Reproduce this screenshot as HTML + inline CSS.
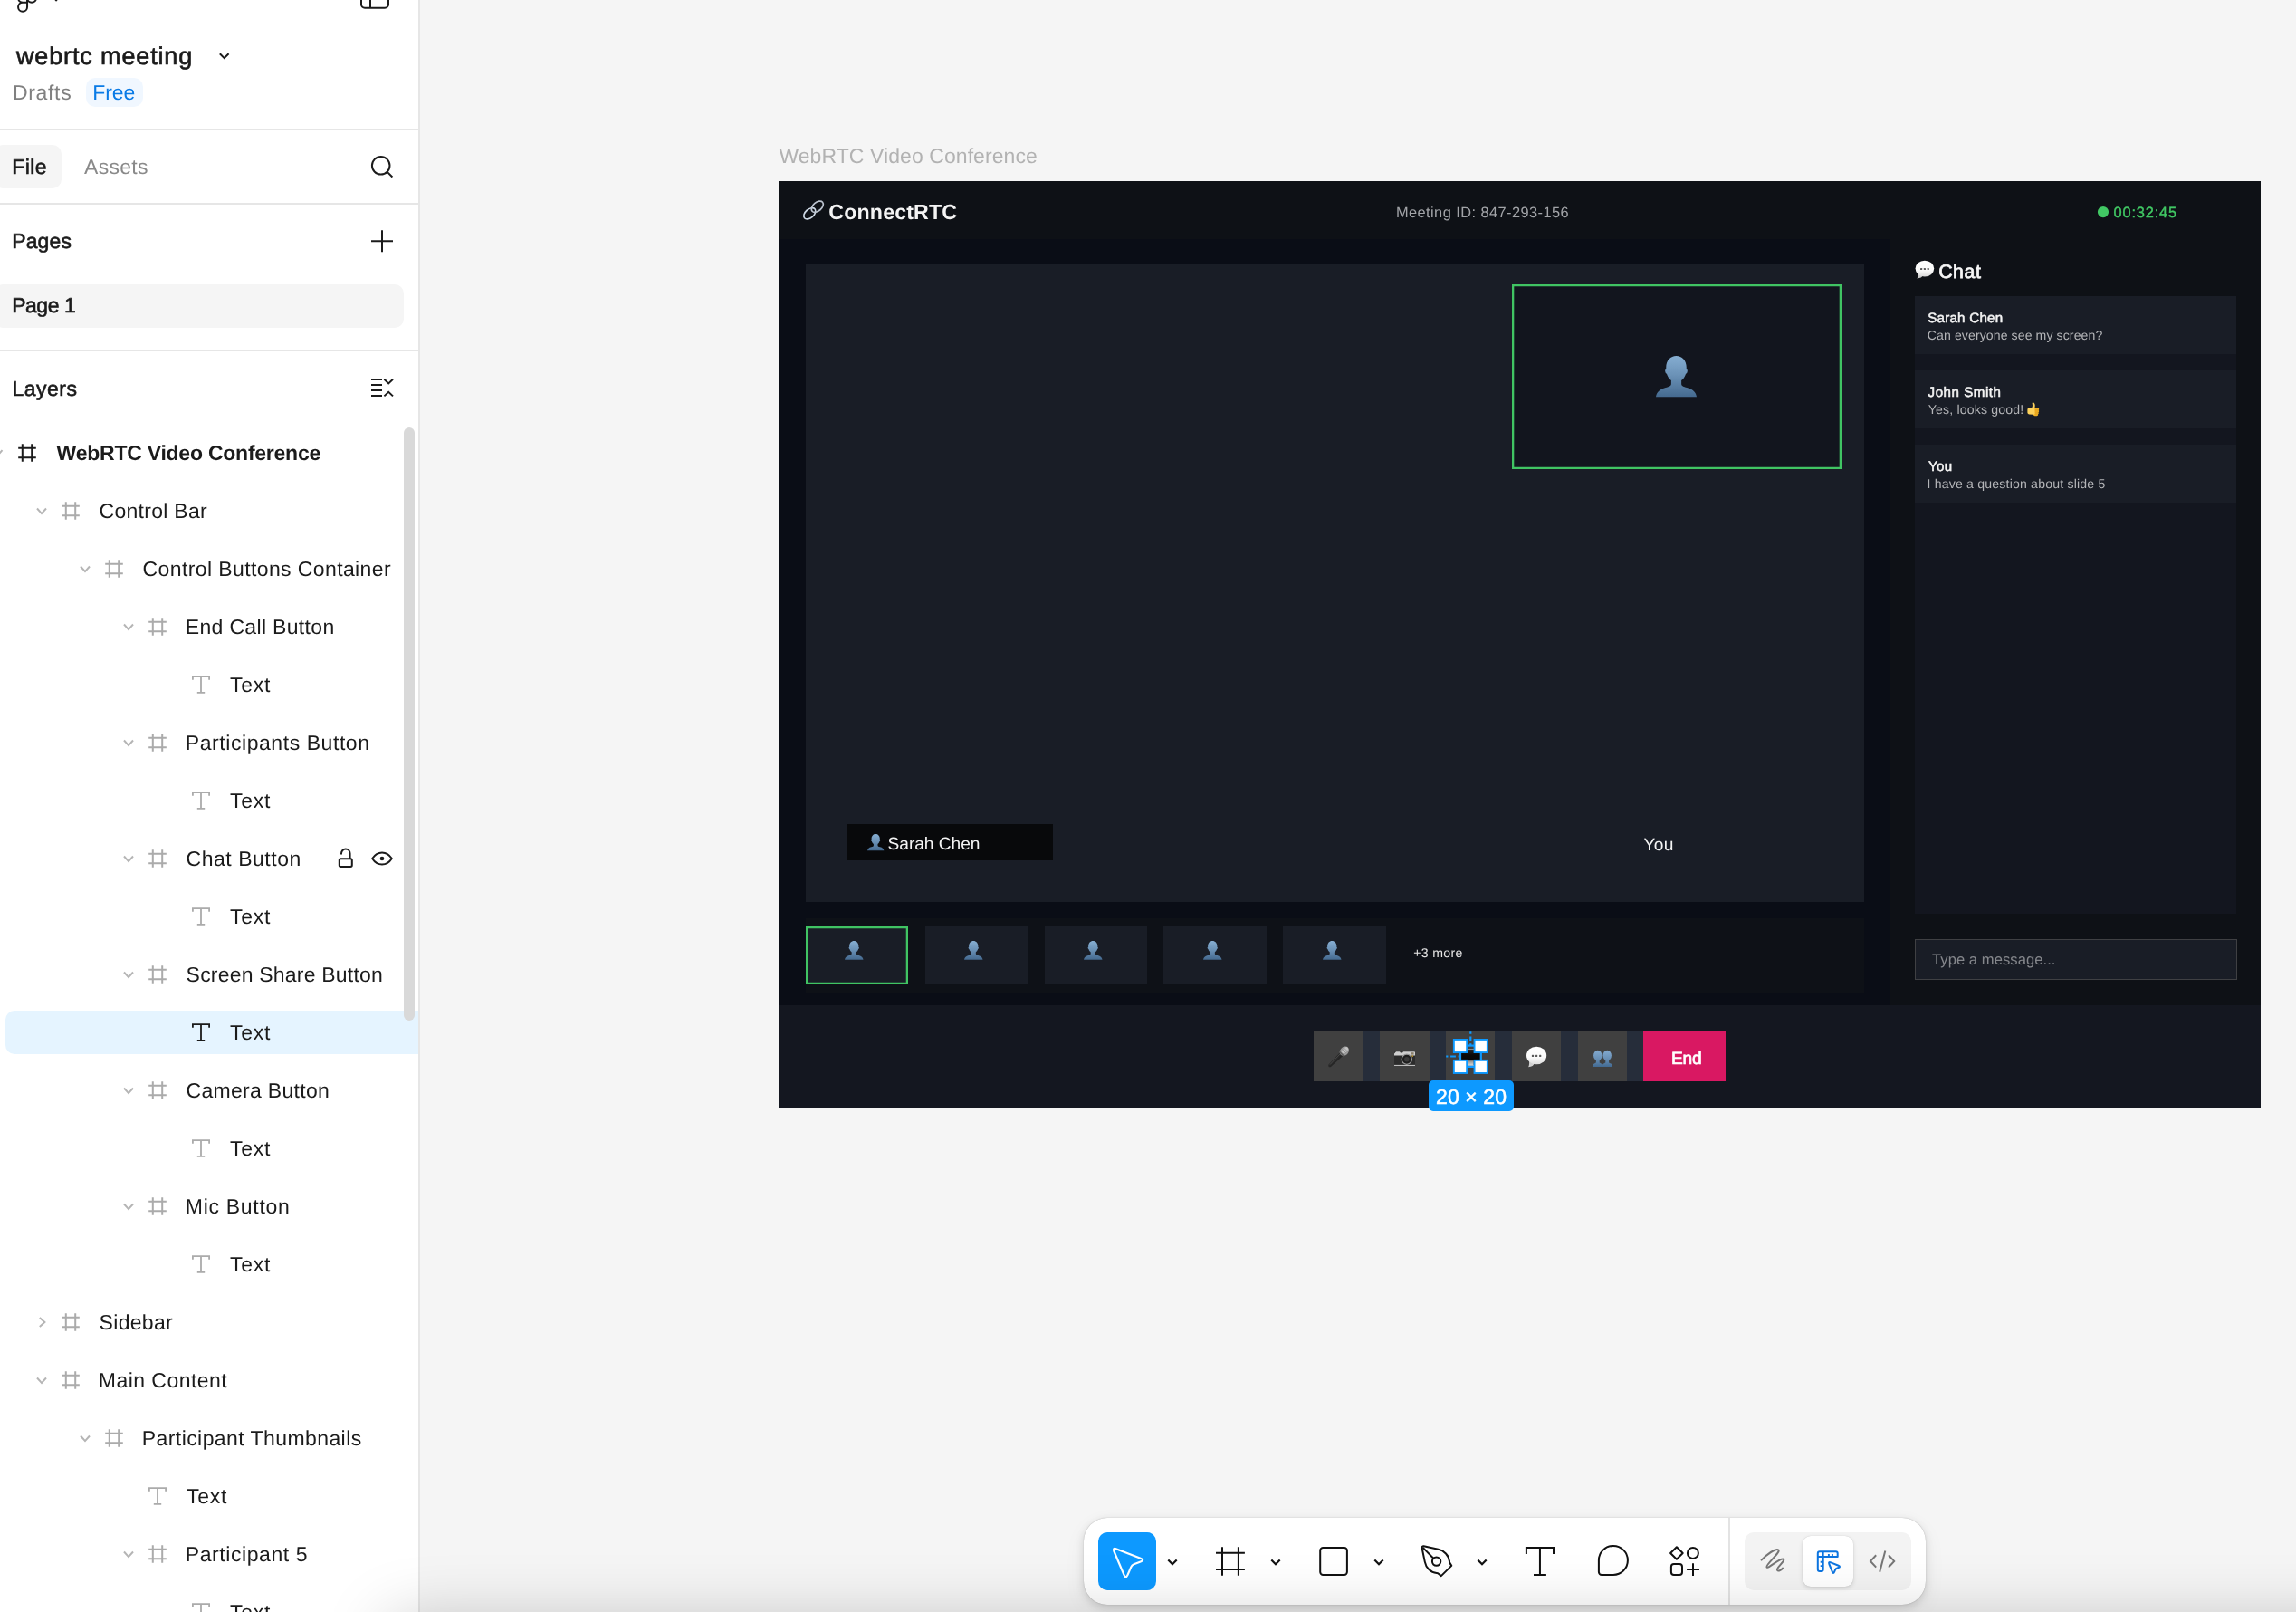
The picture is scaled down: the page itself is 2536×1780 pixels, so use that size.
<!DOCTYPE html><html lang="en"><head><meta charset="utf-8"><title>webrtc meeting – Figma</title>
<style>
html,body{margin:0;padding:0}
html,body{width:2536px;height:1780px;overflow:hidden;background:#f5f5f5}
body{font-family:"Liberation Sans",sans-serif;}
#app{position:relative;width:2536px;height:1780px;overflow:hidden;background:#f5f5f5}
.b{position:absolute;display:block;box-sizing:border-box}
.t{position:absolute;white-space:nowrap;display:block;font-kerning:normal;text-rendering:geometricPrecision}
svg{overflow:visible}
</style></head><body><div id="app">
<svg width="0" height="0" style="position:absolute"><defs>
<linearGradient id="bustg" x1="0" y1="0" x2="0" y2="1"><stop offset="0" stop-color="#86aed2"/><stop offset="0.45" stop-color="#6c93b8"/><stop offset="1" stop-color="#456a90"/></linearGradient>
<linearGradient id="bubg" x1="0" y1="0" x2="0" y2="1"><stop offset="0" stop-color="#ffffff"/><stop offset="0.6" stop-color="#fafafa"/><stop offset="1" stop-color="#dcdcdc"/></linearGradient>
<linearGradient id="micg" x1="0" y1="0" x2="1" y2="1"><stop offset="0" stop-color="#3c3c3c"/><stop offset="1" stop-color="#141414"/></linearGradient>
<linearGradient id="mong" x1="0" y1="0" x2="0" y2="1"><stop offset="0" stop-color="#2a2a2a"/><stop offset="0.5" stop-color="#0a0a0a"/><stop offset="1" stop-color="#050505"/></linearGradient>
<linearGradient id="stdg" x1="0" y1="0" x2="0" y2="1"><stop offset="0" stop-color="#8a8a8a"/><stop offset="1" stop-color="#d0d0d0"/></linearGradient>
</defs></svg>
<div class="b" style="left:860.0px;top:200.0px;width:1637.4px;height:63.7px;background:#0e1116;"></div>
<div class="b" style="left:860.0px;top:263.7px;width:1228.3px;height:846.3px;background:#0a0d16;"></div>
<div class="b" style="left:2088.3px;top:263.7px;width:409.1px;height:846.3px;background:#0e1116;"></div>
<div class="b" style="left:860.0px;top:1110.0px;width:1637.4px;height:112.9px;background:#141720;"></div>
<div class="b" style="left:889.5px;top:290.8px;width:1169.0px;height:704.9px;background:#191d26;"></div>
<div class="b" style="left:1669.6px;top:313.5px;width:364.3px;height:204.9px;background:#12151e;box-shadow:inset 0 0 0 2.3px #40c463;"></div>
<svg class="b" style="left:1829.3px;top:392.9px" width="45.0" height="45.2" viewBox="0 0 100 100" preserveAspectRatio="none"><path d="M50 0C64 0 75 11 75 28C75 30 75 31 74.8 32.5C77.5 33 78 36 77 39C76.5 42 75 43.5 73.5 43.5C71 52 66 57 62.5 60L62.5 68C62.5 74 68 75.5 76 77.5C90 81 98 88 100 100L0 100C2 88 10 81 24 77.5C32 75.5 37.5 74 37.5 68L37.5 60C34 57 29 52 26.5 43.5C25 43.5 23.5 42 23 39C22 36 22.5 33 25.2 32.5C25 31 25 30 25 28C25 11 36 0 50 0Z" fill="url(#bustg)"/></svg>
<div class="b" style="left:935.0px;top:909.8px;width:227.5px;height:40.5px;background:#08090b;"></div>
<svg class="b" style="left:957.6px;top:920.7px" width="18.4" height="18.3" viewBox="0 0 100 100" preserveAspectRatio="none"><path d="M50 0C64 0 75 11 75 28C75 30 75 31 74.8 32.5C77.5 33 78 36 77 39C76.5 42 75 43.5 73.5 43.5C71 52 66 57 62.5 60L62.5 68C62.5 74 68 75.5 76 77.5C90 81 98 88 100 100L0 100C2 88 10 81 24 77.5C32 75.5 37.5 74 37.5 68L37.5 60C34 57 29 52 26.5 43.5C25 43.5 23.5 42 23 39C22 36 22.5 33 25.2 32.5C25 31 25 30 25 28C25 11 36 0 50 0Z" fill="url(#bustg)"/></svg>
<div class="b" style="left:889.5px;top:1013.8px;width:1169.0px;height:82.0px;background:#0e1117;"></div>
<div class="b" style="left:889.6px;top:1023.2px;width:113.6px;height:63.7px;background:#191d26;box-shadow:inset 0 0 0 2.25px #40c463;"></div>
<svg class="b" style="left:932.7px;top:1039.3px" width="20.5" height="20.7" viewBox="0 0 100 100" preserveAspectRatio="none"><path d="M50 0C64 0 75 11 75 28C75 30 75 31 74.8 32.5C77.5 33 78 36 77 39C76.5 42 75 43.5 73.5 43.5C71 52 66 57 62.5 60L62.5 68C62.5 74 68 75.5 76 77.5C90 81 98 88 100 100L0 100C2 88 10 81 24 77.5C32 75.5 37.5 74 37.5 68L37.5 60C34 57 29 52 26.5 43.5C25 43.5 23.5 42 23 39C22 36 22.5 33 25.2 32.5C25 31 25 30 25 28C25 11 36 0 50 0Z" fill="url(#bustg)"/></svg>
<div class="b" style="left:1021.5px;top:1023.2px;width:113.6px;height:63.7px;background:#191d26;"></div>
<svg class="b" style="left:1064.8px;top:1039.3px" width="20.5" height="20.7" viewBox="0 0 100 100" preserveAspectRatio="none"><path d="M50 0C64 0 75 11 75 28C75 30 75 31 74.8 32.5C77.5 33 78 36 77 39C76.5 42 75 43.5 73.5 43.5C71 52 66 57 62.5 60L62.5 68C62.5 74 68 75.5 76 77.5C90 81 98 88 100 100L0 100C2 88 10 81 24 77.5C32 75.5 37.5 74 37.5 68L37.5 60C34 57 29 52 26.5 43.5C25 43.5 23.5 42 23 39C22 36 22.5 33 25.2 32.5C25 31 25 30 25 28C25 11 36 0 50 0Z" fill="url(#bustg)"/></svg>
<div class="b" style="left:1153.5px;top:1023.2px;width:113.6px;height:63.7px;background:#191d26;"></div>
<svg class="b" style="left:1196.8px;top:1039.3px" width="20.5" height="20.7" viewBox="0 0 100 100" preserveAspectRatio="none"><path d="M50 0C64 0 75 11 75 28C75 30 75 31 74.8 32.5C77.5 33 78 36 77 39C76.5 42 75 43.5 73.5 43.5C71 52 66 57 62.5 60L62.5 68C62.5 74 68 75.5 76 77.5C90 81 98 88 100 100L0 100C2 88 10 81 24 77.5C32 75.5 37.5 74 37.5 68L37.5 60C34 57 29 52 26.5 43.5C25 43.5 23.5 42 23 39C22 36 22.5 33 25.2 32.5C25 31 25 30 25 28C25 11 36 0 50 0Z" fill="url(#bustg)"/></svg>
<div class="b" style="left:1285.4px;top:1023.2px;width:113.6px;height:63.7px;background:#191d26;"></div>
<svg class="b" style="left:1328.9px;top:1039.3px" width="20.5" height="20.7" viewBox="0 0 100 100" preserveAspectRatio="none"><path d="M50 0C64 0 75 11 75 28C75 30 75 31 74.8 32.5C77.5 33 78 36 77 39C76.5 42 75 43.5 73.5 43.5C71 52 66 57 62.5 60L62.5 68C62.5 74 68 75.5 76 77.5C90 81 98 88 100 100L0 100C2 88 10 81 24 77.5C32 75.5 37.5 74 37.5 68L37.5 60C34 57 29 52 26.5 43.5C25 43.5 23.5 42 23 39C22 36 22.5 33 25.2 32.5C25 31 25 30 25 28C25 11 36 0 50 0Z" fill="url(#bustg)"/></svg>
<div class="b" style="left:1417.3px;top:1023.2px;width:113.6px;height:63.7px;background:#191d26;"></div>
<svg class="b" style="left:1460.9px;top:1039.3px" width="20.5" height="20.7" viewBox="0 0 100 100" preserveAspectRatio="none"><path d="M50 0C64 0 75 11 75 28C75 30 75 31 74.8 32.5C77.5 33 78 36 77 39C76.5 42 75 43.5 73.5 43.5C71 52 66 57 62.5 60L62.5 68C62.5 74 68 75.5 76 77.5C90 81 98 88 100 100L0 100C2 88 10 81 24 77.5C32 75.5 37.5 74 37.5 68L37.5 60C34 57 29 52 26.5 43.5C25 43.5 23.5 42 23 39C22 36 22.5 33 25.2 32.5C25 31 25 30 25 28C25 11 36 0 50 0Z" fill="url(#bustg)"/></svg>
<div class="b" style="left:2115.3px;top:327.0px;width:355.1px;height:682.3px;background:#13161f;"></div>
<div class="b" style="left:2115.3px;top:327.0px;width:355.1px;height:64.0px;background:#191d26;"></div>
<div class="b" style="left:2115.3px;top:408.8px;width:355.1px;height:64.1px;background:#191d26;"></div>
<div class="b" style="left:2115.3px;top:491.0px;width:355.1px;height:63.7px;background:#191d26;"></div>
<div class="b" style="left:2115.3px;top:1036.9px;width:355.3px;height:45.3px;background:#191d26;border:1px solid #3f4043;"></div>
<svg class="b" style="left:0;top:0" width="2536" height="1780"><path d="M2118.5 301.5Q2118.7 306.6 2117.3 307.6Q2123.3 307.0 2123.3 304.6Z" fill="#cfcfcf"/><ellipse cx="2125.9" cy="296.6" rx="10.3" ry="8.9" fill="url(#bubg)"/><rect x="2121.0" y="295.9" width="2.2" height="2.2" rx="0.6" fill="#5a5a5a"/><rect x="2124.8" y="295.9" width="2.2" height="2.2" rx="0.6" fill="#5a5a5a"/><rect x="2128.6" y="295.9" width="2.2" height="2.2" rx="0.6" fill="#5a5a5a"/></svg>
<svg class="b" style="left:0;top:0" width="2536" height="1780"><ellipse cx="894.3" cy="235.8" rx="7.6" ry="4.7" transform="rotate(-41 894.3 235.8)" fill="none" stroke="#cdd8e4" stroke-width="1.7"/><ellipse cx="902.8" cy="228.2" rx="7.6" ry="4.7" transform="rotate(-41 902.8 228.2)" fill="none" stroke="#bcc4cf" stroke-width="1.7"/><circle cx="2323" cy="234.1" r="6.1" fill="#41c864"/></svg>
<svg class="b" style="left:2238.8px;top:443.6px" width="14" height="15" viewBox="0 0 14 15"><path d="M7 6.3h4.6c1 0 1.6.7 1.6 1.5 0 .5-.2.9-.6 1.1.4.3.6.7.6 1.1 0 .6-.3 1-.8 1.2.3.3.4.6.4 1 0 .6-.4 1-.9 1.2.1.2.2.4.2.7 0 .7-.6 1.2-1.4 1.2H8.4C7.4 14.5 6.8 14 6.4 13.4Z" fill="#f0af24"/><path d="M0.4 8.2C0.4 7.2 1.2 6.6 2.2 6.6L5.2 6.4C6 5 6.2 3.4 5.7 1.7 5.4.6 6.3-.1 7.2.4 8.5 1.2 8.9 3 8.7 4.6L8.4 6.6 8.6 12.6C8.6 13.4 8 13.8 7.2 13.7L2.4 13.5C1.2 13.4.4 12.6.4 11.6Z" fill="#fdd25c"/><path d="M8.8 8.9h3.6M8.9 11.1h3.5M9 13h2.9" stroke="#d9981a" stroke-width="0.5" fill="none"/></svg>
<div class="b" style="left:1451.3px;top:1139.1px;width:454.7px;height:54.7px;background:#262d3a;"></div>
<div class="b" style="left:1451.3px;top:1139.1px;width:54.7px;height:54.7px;background:#404040;"></div>
<div class="b" style="left:1524.2px;top:1139.1px;width:54.4px;height:54.7px;background:#404040;"></div>
<div class="b" style="left:1597.0px;top:1139.1px;width:54.4px;height:54.7px;background:#404040;"></div>
<div class="b" style="left:1669.9px;top:1139.1px;width:54.3px;height:54.7px;background:#404040;"></div>
<div class="b" style="left:1742.6px;top:1139.1px;width:54.4px;height:54.7px;background:#404040;"></div>
<div class="b" style="left:1815.0px;top:1139.1px;width:91.0px;height:54.7px;background:#d91862;"></div>
<svg class="b" style="left:0;top:0" width="2536" height="1780"><path d="M1689.1 1170.9Q1689.3 1177.2 1687.9 1178.2Q1694.3 1177.6 1694.3 1174.3Z" fill="#cfcfcf"/><ellipse cx="1697.1" cy="1165.5" rx="11.1" ry="9.8" fill="url(#bubg)"/><rect x="1691.9" y="1164.8" width="2.2" height="2.2" rx="0.6" fill="#5a5a5a"/><rect x="1696.0" y="1164.8" width="2.2" height="2.2" rx="0.6" fill="#5a5a5a"/><rect x="1700.1" y="1164.8" width="2.2" height="2.2" rx="0.6" fill="#5a5a5a"/></svg>
<svg class="b" style="left:0;top:0" width="2536" height="1780"><defs><linearGradient id="bust2g" gradientUnits="userSpaceOnUse" x1="0" y1="1159.7" x2="0" y2="1178.1"><stop offset="0" stop-color="#84abd0"/><stop offset="0.5" stop-color="#6990b6"/><stop offset="1" stop-color="#426a92"/></linearGradient></defs><g fill="url(#bust2g)"><ellipse cx="1764.8" cy="1165.5" rx="4.75" ry="5.8"/><path d="M1758.8999999999999 1178.1C1758.8999999999999 1175 1761.2 1174.2 1762.8999999999999 1173.4L1762.8999999999999 1169H1766.7L1766.7 1173.4C1768.3999999999999 1174.2 1770.7 1175 1770.7 1178.1Z"/><ellipse cx="1775.2" cy="1165.5" rx="4.75" ry="5.8"/><path d="M1769.3 1178.1C1769.3 1175 1771.6000000000001 1174.2 1773.3 1173.4L1773.3 1169H1777.1000000000001L1777.1000000000001 1173.4C1778.8 1174.2 1781.1000000000001 1175 1781.1000000000001 1178.1Z"/></g></svg>
<svg class="b" style="left:0;top:0" width="2536" height="1780"><path d="M1467.5 1175.4L1479.9 1162.3L1483.5 1165.7L1470.0 1177.9C1468.4 1179.2 1466.3 1177.1 1467.5 1175.4Z" fill="url(#micg)"/><path d="M1469.0 1175.6L1480.6 1163.4" stroke="#4a4a4a" stroke-width="1"/><ellipse cx="1484.9" cy="1160.7" rx="5.7" ry="4.5" transform="rotate(-45 1484.9 1160.7)" fill="#9b9b9b"/><ellipse cx="1485.6" cy="1159.6" rx="4.2" ry="2.4" transform="rotate(-45 1485.6 1159.6)" fill="#c4c4c4"/><path d="M1482.6 1158.6L1486.8 1162.8M1484.4 1157.0L1488.6 1161.2" stroke="#8a8a8a" stroke-width="0.8"/><path d="M1479.6 1161.4L1484.3 1166.1" stroke="#5e5e5e" stroke-width="1.6"/><rect x="1540" y="1161.3" width="23" height="15.6" rx="1" fill="#2c2c2c"/><path d="M1540 1165.6V1163.6L1542 1161.2H1546L1547 1162.6H1549L1550 1161.2H1562.2Q1563 1161.2 1563 1162V1165.6Z" fill="#cfcfcf"/><rect x="1540" y="1175.9" width="23" height="1.1" fill="#bdbdbd"/><circle cx="1553.8" cy="1169.7" r="5.6" fill="#1f1f1f" stroke="#9c9c9c" stroke-width="1.3"/><circle cx="1553.8" cy="1169.7" r="2.8" fill="#3a3a3a"/><rect x="1558.6" y="1162.2" width="3" height="2.4" fill="#8a7f6a"/><rect x="1559.6" y="1165.4" width="1.2" height="1.4" fill="#e8b21e"/><rect x="1613.6" y="1158.2" width="21.6" height="13" rx="0.8" fill="url(#mong)"/><rect x="1613.6" y="1158.0" width="21.6" height="0.9" fill="#9a9a9a"/><rect x="1621.2" y="1171.2" width="6.4" height="4.8" fill="url(#stdg)"/><rect x="1617.4" y="1176" width="14" height="2" rx="0.8" fill="#bdbdbd"/><rect x="1613.0" y="1154.6" width="22.8" height="23.3" fill="none" stroke="#0d99ff" stroke-width="2.2"/><path d="M1624.3 1139.3V1141.7M1624.3 1144.6V1149.4M1624.3 1152.2V1154" stroke="#0d99ff" stroke-width="2.2"/><path d="M1597.2 1166.5H1599.4M1602.1 1166.5H1607.9M1610.6 1166.5H1612" stroke="#0d99ff" stroke-width="2.2"/><rect x="1605.85" y="1147.95" width="14.3" height="14.1" fill="#fff" stroke="#0d99ff" stroke-width="1.9"/><rect x="1605.85" y="1170.85" width="14.3" height="14.1" fill="#fff" stroke="#0d99ff" stroke-width="1.9"/><rect x="1628.55" y="1147.95" width="14.3" height="14.1" fill="#fff" stroke="#0d99ff" stroke-width="1.9"/><rect x="1628.55" y="1170.85" width="14.3" height="14.1" fill="#fff" stroke="#0d99ff" stroke-width="1.9"/></svg>
<div class="b" style="left:1578.2px;top:1192.5px;width:93.7px;height:34.0px;background:#0d99ff;border-radius:5px;"></div>
<div class="b" style="left:1197.0px;top:1676.0px;width:930.0px;height:96.0px;background:#fff;border-radius:26px;box-shadow:0 0 1px rgba(0,0,0,.35),0 3px 10px rgba(0,0,0,.13),0 8px 24px rgba(0,0,0,.06);"></div>
<div class="b" style="left:1213.0px;top:1692.0px;width:64.0px;height:64.0px;background:#0d99ff;border-radius:10px;"></div>
<div class="b" style="left:1909.0px;top:1676.0px;width:2.0px;height:96.0px;background:#e3e3e3;"></div>
<div class="b" style="left:1927.0px;top:1692.0px;width:184.0px;height:64.0px;background:#f3f3f3;border-radius:10px;"></div>
<div class="b" style="left:1991.0px;top:1696.0px;width:56.0px;height:56.0px;background:#fff;border-radius:9px;box-shadow:0 0 1px rgba(0,0,0,.2),0 2px 5px rgba(0,0,0,.12);"></div>
<svg class="b" style="left:0;top:0" width="2536" height="1780" fill="none" stroke-linecap="butt"><path d="M1230.54 1713.28Q1228.50 1708.50 1233.34 1710.40L1259.76 1720.80Q1264.60 1722.70 1259.74 1724.56L1252.44 1727.34Q1250.20 1728.20 1249.24 1730.40L1245.57 1738.83Q1243.50 1743.60 1241.46 1738.82Z" stroke="#fff" stroke-width="2.2" stroke-linejoin="round"/><path d="M1290.3 1722.5L1295 1727.2L1299.7 1722.5" stroke="#111" stroke-width="2.2" fill="none"/><path d="M1350 1708.2V1739.7M1367.9 1708.2V1739.7M1343 1714.8H1374.9M1343 1732.9H1374.9" stroke="#111" stroke-width="2"/><path d="M1404.3 1722.5L1409 1727.2L1413.7 1722.5" stroke="#111" stroke-width="2.2" fill="none"/><rect x="1458.2" y="1709.1" width="29.7" height="29.8" rx="3.2" stroke="#111" stroke-width="2"/><path d="M1518.3 1722.5L1523 1727.2L1527.7 1722.5" stroke="#111" stroke-width="2.2" fill="none"/><path d="M1572.6 1707.3L1588.6 1710.8C1595.2 1712.2 1600.2 1717.4 1600.9 1724L1601.1 1725.4L1603.3 1728.9L1591.8 1740.1L1588.2 1737.3L1586.8 1737.1C1580.2 1736.4 1575 1731.2 1573.8 1724.6L1570.6 1709.2C1570.3 1707.9 1571.3 1707 1572.6 1707.3Z" stroke="#111" stroke-width="2" stroke-linejoin="round"/><circle cx="1586.6" cy="1724.1" r="4.7" stroke="#111" stroke-width="2"/><path d="M1571.4 1708.6L1583.3 1720.8" stroke="#111" stroke-width="2"/><path d="M1632.3 1722.5L1637 1727.2L1641.7 1722.5" stroke="#111" stroke-width="2.2" fill="none"/><path d="M1685.9 1716V1709.1H1716V1716M1700.95 1709.1V1739M1694 1738.9H1707.9" stroke="#111" stroke-width="2"/><path d="M1765.9 1722.9A16 16 0 1 1 1781.9 1738.9H1769.1A3.2 3.2 0 0 1 1765.9 1735.7Z" stroke="#111" stroke-width="2"/><path d="M1851.9 1708.2L1858.7 1715L1851.9 1721.8L1845.1 1715Z" stroke="#111" stroke-width="2" stroke-linejoin="round"/><circle cx="1869.9" cy="1714.9" r="6" stroke="#111" stroke-width="2"/><rect x="1845.9" y="1727" width="12.1" height="11.9" rx="3" stroke="#111" stroke-width="2"/><path d="M1863.1 1732.95H1877M1870 1726.2V1739.9" stroke="#111" stroke-width="2"/><path d="M1945.6 1722.6C1952 1716.4 1960.4 1710.4 1963.8 1711.2C1968.8 1712.6 1950.6 1727 1951.4 1730.2C1952.2 1733.4 1966.4 1719.6 1969.8 1721.6C1972.6 1723.4 1961.4 1731.2 1963 1733.8C1964.4 1735.8 1967.6 1733.4 1969 1731.6" stroke="#767676" stroke-width="2" stroke-linecap="round"/><path d="M2007.8 1715.2Q2007.8 1713.2 2009.8 1713.2H2027.7Q2029.7 1713.2 2029.7 1715.2V1719.0H2013.7V1732.9Q2013.7 1734.9 2011.7 1734.9H2009.8Q2007.8 1734.9 2007.8 1732.9Z" stroke="#0d75e0" stroke-width="2" stroke-linejoin="round"/><path d="M2007.8 1719.0H2013.7M2013.7 1713.2V1719.0M2019.9 1719.0V1716.1M2023.9 1719.0V1716.1M2013.7 1724.8H2010.7M2013.7 1729.1H2010.7" stroke="#0d75e0" stroke-width="1.9"/><path d="M2020.45 1727.25Q2019.20 1724.20 2022.26 1725.43L2030.62 1728.78Q2033.40 1729.90 2030.61 1731.01L2028.81 1731.72Q2027.60 1732.20 2027.10 1733.40L2026.16 1735.63Q2025.00 1738.40 2023.87 1735.62Z" stroke="#0d75e0" stroke-width="2" stroke-linejoin="round" fill="#fff"/><path d="M2072.2 1717.2L2066 1723.9L2072.2 1730.6M2086 1717.2L2092.2 1723.9L2086 1730.6M2082.3 1712.5L2076.2 1735.8" stroke="#767676" stroke-width="2"/></svg>
<div class="b" style="left:0.0px;top:0.0px;width:462.0px;height:1780.0px;background:#fff;"></div>
<div class="b" style="left:462.0px;top:0.0px;width:2.0px;height:1780.0px;background:#e6e6e6;"></div>
<div class="b" style="left:94.9px;top:86.2px;width:62.9px;height:31.4px;background:#f0f7ff;border-radius:10px;"></div>
<div class="b" style="left:0.0px;top:142.0px;width:462.0px;height:2.0px;background:#e6e6e6;"></div>
<div class="b" style="left:0.0px;top:224.0px;width:462.0px;height:2.0px;background:#e6e6e6;"></div>
<div class="b" style="left:0.0px;top:386.0px;width:462.0px;height:2.0px;background:#e6e6e6;"></div>
<div class="b" style="left:-6.0px;top:160.0px;width:74.0px;height:48.0px;background:#f5f5f5;border-radius:10px;"></div>
<div class="b" style="left:-6.0px;top:314.0px;width:452.0px;height:48.0px;background:#f5f5f5;border-radius:10px;"></div>
<div class="b" style="left:6.0px;top:1116.2px;width:456.0px;height:47.5px;background:#e5f4ff;border-radius:10px 0 0 10px;"></div>
<div class="b" style="left:446.2px;top:472.0px;width:11.8px;height:655.4px;background:#d9d9d9;border-radius:6px;"></div>
<svg class="b" style="left:0;top:0" width="464" height="1780" fill="none"><path d="M25.05 2.7H30.05V7.7A5 5 0 1 1 25.05 2.7ZM30.05 2.7V-8M25.05 2.7A5 5 0 0 1 25.05 -7.3H30.05" stroke="#1b1b1b" stroke-width="2"/><circle cx="35.05" cy="-2.3" r="5" stroke="#1b1b1b" stroke-width="2"/><path d="M57.6 -4.2L62.05 0.25L66.5 -4.2" stroke="#1b1b1b" stroke-width="2"/><rect x="399" y="-14" width="30" height="22.8" rx="4" stroke="#1b1b1b" stroke-width="2"/><path d="M409 -14V8.8" stroke="#1b1b1b" stroke-width="2"/><path d="M242.8 59.2L247.7 64.1L252.6 59.2" stroke="#1b1b1b" stroke-width="2"/><circle cx="420.7" cy="182.8" r="9.8" stroke="#1b1b1b" stroke-width="2"/><path d="M427.8 189.9L433.4 195.5" stroke="#1b1b1b" stroke-width="2"/><path d="M410 266.2H434M422 254.2V278.2" stroke="#1b1b1b" stroke-width="2"/><path d="M410 419H422M410 425H422M410 431H422M410 437H422" stroke="#1b1b1b" stroke-width="2"/><path d="M424.4 418.8L429.2 423.4L434 418.8M424.4 437.4L429.2 432.8L434 437.4" stroke="#1b1b1b" stroke-width="2"/><rect x="374.8" y="948.3" width="14" height="8.6" rx="1.6" stroke="#1b1b1b" stroke-width="2"/><path d="M377 943.6V942.4A4.8 4.8 0 0 1 386.6 942.4V948.3" stroke="#1b1b1b" stroke-width="2"/><path d="M411.2 948C414 943.6 417.8 941.4 422 941.4C426.2 941.4 430 943.6 432.8 948C430 952.4 426.2 954.6 422 954.6C417.8 954.6 414 952.4 411.2 948Z" stroke="#1b1b1b" stroke-width="2" stroke-linejoin="round"/><circle cx="422" cy="948" r="2.3" fill="#1b1b1b"/><path d="M24.8 490.2V509.8M35.2 490.2V509.8M20.2 494.8H39.8M20.2 505.2H39.8" stroke="#1b1b1b" stroke-width="2" fill="none"/><path d="M-7.5 497.2L-2.5 502.8L2.5 497.2" stroke="#b5b5b5" stroke-width="2" fill="none"/><path d="M72.8 554.2V573.8M83.2 554.2V573.8M68.2 558.8H87.8M68.2 569.2H87.8" stroke="#ababab" stroke-width="2" fill="none"/><path d="M41 561.5L46 567.0999999999999L51 561.5" stroke="#b5b5b5" stroke-width="2" fill="none"/><path d="M120.8 618.2V637.8M131.2 618.2V637.8M116.2 622.8H135.8M116.2 633.2H135.8" stroke="#ababab" stroke-width="2" fill="none"/><path d="M89 625.5L94 631.0999999999999L99 625.5" stroke="#b5b5b5" stroke-width="2" fill="none"/><path d="M168.8 682.2V701.8M179.2 682.2V701.8M164.2 686.8H183.8M164.2 697.2H183.8" stroke="#ababab" stroke-width="2" fill="none"/><path d="M137 689.5L142 695.0999999999999L147 689.5" stroke="#b5b5b5" stroke-width="2" fill="none"/><path d="M212.9 750.8000000000001V747.1H231.1V750.8000000000001M222 747.1V764.9M217.8 764.9H226.2" stroke="#ababab" stroke-width="1.8" fill="none"/><path d="M168.8 810.2V829.8M179.2 810.2V829.8M164.2 814.8H183.8M164.2 825.2H183.8" stroke="#ababab" stroke-width="2" fill="none"/><path d="M137 817.5L142 823.0999999999999L147 817.5" stroke="#b5b5b5" stroke-width="2" fill="none"/><path d="M212.9 878.8000000000001V875.1H231.1V878.8000000000001M222 875.1V892.9M217.8 892.9H226.2" stroke="#ababab" stroke-width="1.8" fill="none"/><path d="M168.8 938.2V957.8M179.2 938.2V957.8M164.2 942.8H183.8M164.2 953.2H183.8" stroke="#ababab" stroke-width="2" fill="none"/><path d="M137 945.5L142 951.0999999999999L147 945.5" stroke="#b5b5b5" stroke-width="2" fill="none"/><path d="M212.9 1006.8000000000001V1003.1H231.1V1006.8000000000001M222 1003.1V1020.9M217.8 1020.9H226.2" stroke="#ababab" stroke-width="1.8" fill="none"/><path d="M168.8 1066.2V1085.8M179.2 1066.2V1085.8M164.2 1070.8H183.8M164.2 1081.2H183.8" stroke="#ababab" stroke-width="2" fill="none"/><path d="M137 1073.5L142 1079.1L147 1073.5" stroke="#b5b5b5" stroke-width="2" fill="none"/><path d="M212.9 1134.8V1131.1000000000001H231.1V1134.8M222 1131.1000000000001V1148.8999999999999M217.8 1148.8999999999999H226.2" stroke="#1b1b1b" stroke-width="1.8" fill="none"/><path d="M168.8 1194.2V1213.8M179.2 1194.2V1213.8M164.2 1198.8H183.8M164.2 1209.2H183.8" stroke="#ababab" stroke-width="2" fill="none"/><path d="M137 1201.5L142 1207.1L147 1201.5" stroke="#b5b5b5" stroke-width="2" fill="none"/><path d="M212.9 1262.8V1259.1000000000001H231.1V1262.8M222 1259.1000000000001V1276.8999999999999M217.8 1276.8999999999999H226.2" stroke="#ababab" stroke-width="1.8" fill="none"/><path d="M168.8 1322.2V1341.8M179.2 1322.2V1341.8M164.2 1326.8H183.8M164.2 1337.2H183.8" stroke="#ababab" stroke-width="2" fill="none"/><path d="M137 1329.5L142 1335.1L147 1329.5" stroke="#b5b5b5" stroke-width="2" fill="none"/><path d="M212.9 1390.8V1387.1000000000001H231.1V1390.8M222 1387.1000000000001V1404.8999999999999M217.8 1404.8999999999999H226.2" stroke="#ababab" stroke-width="1.8" fill="none"/><path d="M72.8 1450.2V1469.8M83.2 1450.2V1469.8M68.2 1454.8H87.8M68.2 1465.2H87.8" stroke="#ababab" stroke-width="2" fill="none"/><path d="M43.800000000000004 1455L49.4 1460L43.800000000000004 1465" stroke="#b5b5b5" stroke-width="2" fill="none"/><path d="M72.8 1514.2V1533.8M83.2 1514.2V1533.8M68.2 1518.8H87.8M68.2 1529.2H87.8" stroke="#ababab" stroke-width="2" fill="none"/><path d="M41 1521.5L46 1527.1L51 1521.5" stroke="#b5b5b5" stroke-width="2" fill="none"/><path d="M120.8 1578.2V1597.8M131.2 1578.2V1597.8M116.2 1582.8H135.8M116.2 1593.2H135.8" stroke="#ababab" stroke-width="2" fill="none"/><path d="M89 1585.5L94 1591.1L99 1585.5" stroke="#b5b5b5" stroke-width="2" fill="none"/><path d="M164.9 1646.8V1643.1000000000001H183.1V1646.8M174 1643.1000000000001V1660.8999999999999M169.8 1660.8999999999999H178.2" stroke="#ababab" stroke-width="1.8" fill="none"/><path d="M168.8 1706.2V1725.8M179.2 1706.2V1725.8M164.2 1710.8H183.8M164.2 1721.2H183.8" stroke="#ababab" stroke-width="2" fill="none"/><path d="M137 1713.5L142 1719.1L147 1713.5" stroke="#b5b5b5" stroke-width="2" fill="none"/><path d="M212.9 1774.8V1771.1000000000001H231.1V1774.8M222 1771.1000000000001V1788.8999999999999M217.8 1788.8999999999999H226.2" stroke="#ababab" stroke-width="1.8" fill="none"/></svg>
<div class="b" style="left:0;top:0;width:2536px;height:1780px;will-change:transform">
<span class="t" style="left:17.97px;top:49.00px;font-size:27px;line-height:27px;letter-spacing:0.863px;color:#1b1b1b;-webkit-text-stroke:0.7px #1b1b1b;">webrtc meeting</span>
<span class="t" style="left:13.90px;top:91.00px;font-size:23px;line-height:23px;letter-spacing:0.692px;color:#808080;">Drafts</span>
<span class="t" style="left:102.20px;top:91.00px;font-size:23px;line-height:23px;letter-spacing:-0.033px;color:#0a7be6;">Free</span>
<span class="t" style="left:13.20px;top:173.00px;font-size:23px;line-height:23px;letter-spacing:0.410px;color:#1b1b1b;-webkit-text-stroke:0.6px #1b1b1b;">File</span>
<span class="t" style="left:93.00px;top:173.00px;font-size:23px;line-height:23px;letter-spacing:0.296px;color:#8a8a8a;">Assets</span>
<span class="t" style="left:13.20px;top:255.00px;font-size:23px;line-height:23px;letter-spacing:0.121px;color:#1b1b1b;-webkit-text-stroke:0.6px #1b1b1b;">Pages</span>
<span class="t" style="left:13.20px;top:326.00px;font-size:23px;line-height:23px;letter-spacing:-0.481px;color:#1b1b1b;-webkit-text-stroke:0.6px #1b1b1b;">Page 1</span>
<span class="t" style="left:13.40px;top:418.00px;font-size:23px;line-height:23px;letter-spacing:0.493px;color:#1b1b1b;-webkit-text-stroke:0.6px #1b1b1b;">Layers</span>
<span class="t" style="left:62.60px;top:489.00px;font-size:23px;line-height:23px;letter-spacing:-0.238px;color:#1b1b1b;font-weight:700;">WebRTC Video Conference</span>
<span class="t" style="left:109.50px;top:553.00px;font-size:23px;line-height:23px;letter-spacing:0.283px;color:#1b1b1b;">Control Bar</span>
<span class="t" style="left:157.50px;top:617.00px;font-size:23px;line-height:23px;letter-spacing:0.396px;color:#1b1b1b;">Control Buttons Container</span>
<span class="t" style="left:204.80px;top:681.00px;font-size:23px;line-height:23px;letter-spacing:0.326px;color:#1b1b1b;">End Call Button</span>
<span class="t" style="left:254.10px;top:745.00px;font-size:23px;line-height:23px;letter-spacing:0.736px;color:#1b1b1b;">Text</span>
<span class="t" style="left:204.80px;top:809.00px;font-size:23px;line-height:23px;letter-spacing:0.563px;color:#1b1b1b;">Participants Button</span>
<span class="t" style="left:254.10px;top:873.00px;font-size:23px;line-height:23px;letter-spacing:0.736px;color:#1b1b1b;">Text</span>
<span class="t" style="left:205.50px;top:937.00px;font-size:23px;line-height:23px;letter-spacing:0.532px;color:#1b1b1b;">Chat Button</span>
<span class="t" style="left:254.10px;top:1001.00px;font-size:23px;line-height:23px;letter-spacing:0.736px;color:#1b1b1b;">Text</span>
<span class="t" style="left:205.60px;top:1065.00px;font-size:23px;line-height:23px;letter-spacing:0.204px;color:#1b1b1b;">Screen Share Button</span>
<span class="t" style="left:254.10px;top:1129.00px;font-size:23px;line-height:23px;letter-spacing:0.736px;color:#1b1b1b;">Text</span>
<span class="t" style="left:205.50px;top:1193.00px;font-size:23px;line-height:23px;letter-spacing:0.300px;color:#1b1b1b;">Camera Button</span>
<span class="t" style="left:254.10px;top:1257.00px;font-size:23px;line-height:23px;letter-spacing:0.736px;color:#1b1b1b;">Text</span>
<span class="t" style="left:204.80px;top:1321.00px;font-size:23px;line-height:23px;letter-spacing:0.704px;color:#1b1b1b;">Mic Button</span>
<span class="t" style="left:254.10px;top:1385.00px;font-size:23px;line-height:23px;letter-spacing:0.736px;color:#1b1b1b;">Text</span>
<span class="t" style="left:109.60px;top:1449.00px;font-size:23px;line-height:23px;letter-spacing:0.297px;color:#1b1b1b;">Sidebar</span>
<span class="t" style="left:108.80px;top:1513.00px;font-size:23px;line-height:23px;letter-spacing:0.463px;color:#1b1b1b;">Main Content</span>
<span class="t" style="left:156.80px;top:1577.00px;font-size:23px;line-height:23px;letter-spacing:0.422px;color:#1b1b1b;">Participant Thumbnails</span>
<span class="t" style="left:206.10px;top:1641.00px;font-size:23px;line-height:23px;letter-spacing:0.703px;color:#1b1b1b;">Text</span>
<span class="t" style="left:204.80px;top:1705.00px;font-size:23px;line-height:23px;letter-spacing:0.579px;color:#1b1b1b;">Participant 5</span>
<span class="t" style="left:254.10px;top:1769.00px;font-size:23px;line-height:23px;letter-spacing:0.736px;color:#1b1b1b;">Text</span>
<span class="t" style="left:860.40px;top:161.00px;font-size:23px;line-height:23px;letter-spacing:0.071px;color:#b2b2b2;">WebRTC Video Conference</span>
<span class="t" style="left:915.30px;top:223.00px;font-size:23.2px;line-height:23px;letter-spacing:0.153px;color:#f4f4f4;font-weight:700;">ConnectRTC</span>
<span class="t" style="left:1541.90px;top:227.00px;font-size:16.4px;line-height:16px;letter-spacing:0.427px;color:#a2a4a8;">Meeting ID: 847-293-156</span>
<span class="t" style="left:2334.50px;top:227.00px;font-size:16.4px;line-height:16px;letter-spacing:0.826px;color:#41c864;-webkit-text-stroke:0.4px #41c864;">00:32:45</span>
<span class="t" style="left:2141.18px;top:290.00px;font-size:21.3px;line-height:21px;letter-spacing:0.559px;color:#f6f6f6;-webkit-text-stroke:0.75px #f6f6f6;">Chat</span>
<span class="t" style="left:2129.18px;top:344.00px;font-size:15.1px;line-height:15px;letter-spacing:0.262px;color:#f4f4f4;-webkit-text-stroke:0.55px #f4f4f4;">Sarah Chen</span>
<span class="t" style="left:2128.80px;top:363.00px;font-size:14.1px;line-height:14px;letter-spacing:0.089px;color:#b4b5b8;">Can everyone see my screen?</span>
<span class="t" style="left:2129.57px;top:426.00px;font-size:15.1px;line-height:15px;letter-spacing:0.546px;color:#f4f4f4;-webkit-text-stroke:0.55px #f4f4f4;">John Smith</span>
<span class="t" style="left:2129.70px;top:445.00px;font-size:14.1px;line-height:14px;letter-spacing:0.178px;color:#b4b5b8;">Yes, looks good!</span>
<span class="t" style="left:2129.97px;top:508.00px;font-size:15.1px;line-height:15px;letter-spacing:0.383px;color:#f4f4f4;-webkit-text-stroke:0.55px #f4f4f4;">You</span>
<span class="t" style="left:2128.50px;top:527.00px;font-size:14.1px;line-height:14px;letter-spacing:0.186px;color:#b4b5b8;">I have a question about slide 5</span>
<span class="t" style="left:980.50px;top:923.00px;font-size:19.2px;line-height:19px;letter-spacing:-0.043px;color:#f4f4f4;">Sarah Chen</span>
<span class="t" style="left:1815.60px;top:924.00px;font-size:19.2px;line-height:19px;letter-spacing:0.239px;color:#f4f4f4;">You</span>
<span class="t" style="left:1561.30px;top:1045.00px;font-size:14.1px;line-height:14px;letter-spacing:0.321px;color:#e6e6e6;">+3 more</span>
<span class="t" style="left:2134.00px;top:1051.00px;font-size:16.6px;line-height:17px;letter-spacing:0.055px;color:#85878c;">Type a message...</span>
<span class="t" style="left:1846.05px;top:1160.00px;font-size:19.2px;line-height:19px;letter-spacing:-0.242px;color:#ffffff;-webkit-text-stroke:0.7px #ffffff;">End</span>
<span class="t" style="left:1586.05px;top:1200.00px;font-size:23px;line-height:23px;letter-spacing:0.086px;color:#ffffff;-webkit-text-stroke:0.5px #ffffff;">20 × 20</span>
</div>
<div class="b" style="left:430px;top:1790px;width:2400px;height:200px;box-shadow:0 0 72px rgba(0,0,0,.22)"></div>
</div></body></html>
